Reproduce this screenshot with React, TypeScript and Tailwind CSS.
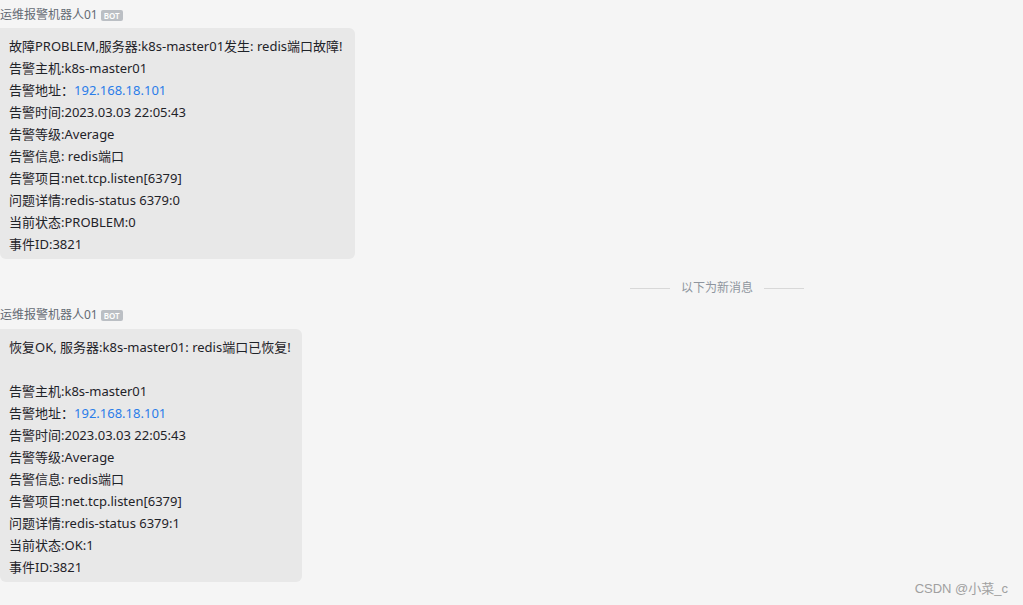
import React from "react";

const font = { fontFamily: '"Noto Sans", "Noto Sans CJK SC", sans-serif' };

function Sender() {
  return (
    <div className="flex items-center h-[18px] text-[12px] text-[#646a73] leading-[18px]">
      <span>运维报警机器人01</span>
      <span className="ml-[3px] bg-[#bbbfc4] text-white text-[8px] leading-[11px] px-[3px] rounded-[2px] font-semibold">BOT</span>
    </div>
  );
}

function Line({ children }: { children?: React.ReactNode }) {
  return <div className="h-[22px] leading-[22px] whitespace-nowrap">{children}</div>;
}

const Link = ({ t }: { t: string }) => <span className="text-[#2b7de9]">{t}</span>;

export default function App() {
  return (
    <div className="relative w-[1023px] h-[605px] bg-[#f5f5f5] overflow-hidden text-[#1f2329] text-[13px]" style={font}>
      <div className="flex flex-col pt-[6px]">
        <Sender />
        <div className="mt-[4px] self-start w-[355px] bg-[#e8e8e8] rounded-r-[6px] rounded-bl-[6px] pl-[9px] pt-[7px] pb-[4px]">
          <Line>故障PROBLEM,服务器:k8s-master01发生: redis端口故障!</Line>
          <Line>告警主机:k8s-master01</Line>
          <Line>告警地址：<Link t="192.168.18.101" /></Line>
          <Line>告警时间:2023.03.03 22:05:43</Line>
          <Line>告警等级:Average</Line>
          <Line>告警信息: redis端口</Line>
          <Line>告警项目:net.tcp.listen[6379]</Line>
          <Line>问题详情:redis-status 6379:0</Line>
          <Line>当前状态:PROBLEM:0</Line>
          <Line>事件ID:3821</Line>
        </div>
        <div className="ml-[411px] mt-[19px] h-[20px] flex items-center justify-center gap-[11px] text-[12px] text-[#8f959e]">
          <div className="w-[40px] h-px bg-[#d8d8d8]" />
          <span>以下为新消息</span>
          <div className="w-[40px] h-px bg-[#d8d8d8]" />
        </div>
        <div className="mt-[8px]">
          <Sender />
        </div>
        <div className="mt-[5px] self-start w-[302px] bg-[#e8e8e8] rounded-r-[6px] rounded-bl-[6px] pl-[9px] pt-[7px] pb-[4px]">
          <Line>恢复OK, 服务器:k8s-master01: redis端口已恢复!</Line>
          <Line />
          <Line>告警主机:k8s-master01</Line>
          <Line>告警地址：<Link t="192.168.18.101" /></Line>
          <Line>告警时间:2023.03.03 22:05:43</Line>
          <Line>告警等级:Average</Line>
          <Line>告警信息: redis端口</Line>
          <Line>告警项目:net.tcp.listen[6379]</Line>
          <Line>问题详情:redis-status 6379:1</Line>
          <Line>当前状态:OK:1</Line>
          <Line>事件ID:3821</Line>
        </div>
      </div>
      <div className="absolute right-[15px] bottom-[7px] text-[13px] text-[#a0a0a0]" style={{ fontFamily: '"Liberation Sans", "Noto Sans CJK SC", sans-serif' }}>
        CSDN @小菜_c
      </div>
    </div>
  );
}
